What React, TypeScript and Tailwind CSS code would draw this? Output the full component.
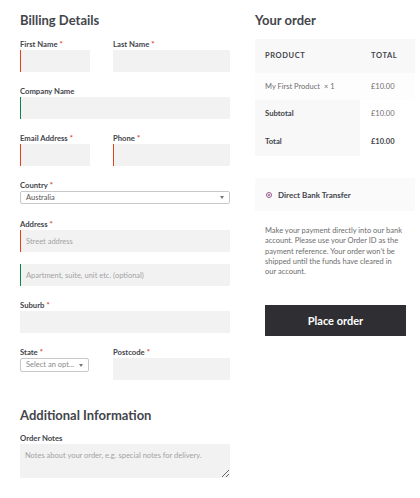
import React from 'react';

const labelCls = 'block h-[10px] leading-[10px] text-[7.7px] font-bold text-[#43454b] mb-px whitespace-nowrap';
const inputCls = 'block w-full h-[22px] bg-[#f2f2f2] text-[7.5px] text-[#43454b] px-[5px] outline-none placeholder:text-[#a3a3a3]';

function Req() {
  return <span className="text-[#e2401c] ml-[2px]">*</span>;
}

function Field({ label, required, width, border, bg, placeholder }: {
  label?: string;
  required?: boolean;
  width?: string;
  border?: 'red' | 'green' | 'none';
  bg?: string;
  placeholder?: string;
}) {
  const borderCls =
    border === 'red' ? 'border-l border-[#e2401c]' : border === 'green' ? 'border-l border-[#0f834d]' : '';
  return (
    <div className={width ?? 'w-full'}>
      {label && (
        <label className={labelCls}>
          {label}
          {required && <Req />}
        </label>
      )}
      <input className={`${inputCls} ${borderCls} ${bg ?? ''}`} placeholder={placeholder} />
    </div>
  );
}

function FakeSelect({ value, className, textCls }: { value: string; className: string; textCls?: string }) {
  return (
    <div className={`flex items-center justify-between bg-white border border-[#c8c8c8] rounded-[2px] pl-[5px] pr-[5px] ${className}`}>
      <span className={`text-[7.5px] leading-none ${textCls ?? 'text-[#555]'}`}>{value}</span>
      <span className="w-0 h-0 border-l-[2px] border-r-[2px] border-t-[3px] border-l-transparent border-r-transparent border-t-[#777]" />
    </div>
  );
}

export default function App() {
  return (
    <div className="w-[420px] h-[498px] bg-white flex pl-5 pt-[13px] font-['Lato','Noto_Sans',sans-serif] text-[#43454b]">
      {/* Billing column */}
      <div className="w-[210px] shrink-0">
        <h3 className="h-[15px] leading-[15px] text-[13px] font-bold text-[#43454b]">Billing Details</h3>

        <div className="flex mt-[11px]">
          <Field label="First Name" required width="w-[70px]" border="red" />
          <Field label="Last Name" required width="w-[117px] ml-[23px]" bg="bg-[#e6e6e6]" />
        </div>

        <div className="mt-[14px]">
          <Field label="Company Name" border="green" />
        </div>

        <div className="flex mt-[14px]">
          <Field label="Email Address" required width="w-[70px]" border="red" />
          <Field label="Phone" required width="w-[117px] ml-[23px]" border="red" />
        </div>

        <div className="mt-[14px]">
          <label className={labelCls}>
            Country
            <Req />
          </label>
          <FakeSelect value="Australia" className="h-[13px] w-full" />
        </div>

        <div className="mt-[15px]">
          <Field label="Address" required border="red" placeholder="Street address" />
        </div>
        <div className="mt-[12px]">
          <Field border="green" placeholder="Apartment, suite, unit etc. (optional)" />
        </div>

        <div className="mt-[14px]">
          <Field label="Suburb" required />
        </div>

        <div className="flex mt-[14px]">
          <div className="w-[70px]">
            <label className={labelCls}>
              State
              <Req />
            </label>
            <FakeSelect value="Select an opt..." className="h-[14px] w-[69px]" textCls="text-[#8a8a8a]" />
          </div>
          <Field label="Postcode" required width="w-[117px] ml-[23px]" />
        </div>

        <h3 className="mt-[28px] h-[15px] leading-[15px] text-[13px] font-bold text-[#43454b]">Additional Information</h3>
        <div className="mt-[10px]">
          <label className={labelCls}>Order Notes</label>
          <textarea
            className="block w-full h-[34px] bg-[#f2f2f2] text-[7.5px] px-[5px] py-[6px] outline-none placeholder:text-[#a3a3a3]"
            placeholder="Notes about your order, e.g. special notes for delivery."
          />
        </div>
      </div>

      {/* Order column */}
      <div className="w-[160px] ml-[25px] shrink-0">
        <h3 className="h-[15px] leading-[15px] text-[13px] font-bold text-[#43454b]">Your order</h3>

        <div className="mt-[11px] text-[7.5px]">
          <div className="flex h-[34px] bg-[#f8f8f8] items-center font-bold text-[#43454b] tracking-[0.08em]">
            <div className="w-[105px] pl-[10px]">PRODUCT</div>
            <div className="pl-[11px]">TOTAL</div>
          </div>
          <div className="flex h-[27px] bg-[#fdfdfd] items-center text-[#6d6d6d]">
            <div className="w-[105px] pl-[10px]">
              My First Product <span className="ml-[2px]">× 1</span>
            </div>
            <div className="pl-[11px]">£10.00</div>
          </div>
          <div className="flex h-[28px]">
            <div className="w-[105px] pl-[10px] bg-[#f8f8f8] flex items-center font-bold text-[7.7px]">Subtotal</div>
            <div className="pl-[11px] flex items-center text-[#6d6d6d]">£10.00</div>
          </div>
          <div className="flex h-[28px]">
            <div className="w-[105px] pl-[10px] bg-[#f8f8f8] flex items-center font-bold text-[7.7px]">Total</div>
            <div className="pl-[11px] flex items-center font-bold">£10.00</div>
          </div>
        </div>

        <div className="mt-[22px] h-[33px] bg-[#fafafa] flex items-center pl-[11px] gap-[6px]">
          <span className="w-[6px] h-[6px] rounded-full border border-[#96588a] flex items-center justify-center">
            <span className="w-[2px] h-[2px] rounded-full bg-[#96588a]" />
          </span>
          <span className="text-[8px] font-bold text-[#43454b]">Direct Bank Transfer</span>
        </div>

        <p className="mt-[15px] px-[10px] text-[7.5px] leading-[10.3px] text-[#6d6d6d] whitespace-nowrap">
          Make your payment directly into our bank
          <br />
          account. Please use your Order ID as the
          <br />
          payment reference. Your order won’t be
          <br />
          shipped until the funds have cleared in
          <br />
          our account.
        </p>

        <button className="mt-[28px] ml-[10px] w-[141px] h-[31px] bg-[#2f2f33] text-white text-[11px] font-bold">
          Place order
        </button>
      </div>
    </div>
  );
}
